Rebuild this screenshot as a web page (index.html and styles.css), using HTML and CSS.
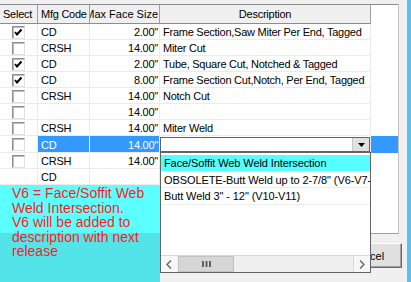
FILE: index.html
```html
<!DOCTYPE html>
<html lang="en">
<head>
    <meta charset="UTF-8">
    <meta name="viewport" content="width=device-width, initial-scale=1.0">
    <title>Cut Operations</title>
    <link rel="stylesheet" href="styles.css">
</head>
<body>

<div class="window">
    <div class="content">
        <div class="grid">
            <table class="cuts">
                <colgroup>
                    <col class="c-sel">
                    <col class="c-mfg">
                    <col class="c-size">
                    <col class="c-desc">
                    <col class="c-fill">
                </colgroup>
                <thead>
                    <tr>
                        <th><div class="hd">Select</div></th>
                        <th><div class="hd">Mfg Code</div></th>
                        <th><div class="hd hd-right"><span>Max Face Size</span></div></th>
                        <th><div class="hd hd-center">Description</div></th>
                        <th class="fill"></th>
                    </tr>
                </thead>
                <tbody>
                    <tr>
                        <td class="sel"><span class="check"><svg width="11" height="11" viewBox="0 0 11 11"><polyline points="2,5 4,7.5 8.5,2.5" fill="none" stroke="#000" stroke-width="2"/></svg></span></td>
                        <td>CD</td><td class="num">2.00"</td>
                        <td>Frame Section,Saw Miter Per End, Tagged</td><td class="fill"></td>
                    </tr>
                    <tr>
                        <td class="sel"><span class="check"></span></td>
                        <td>CRSH</td><td class="num">14.00"</td>
                        <td>Miter Cut</td><td class="fill"></td>
                    </tr>
                    <tr>
                        <td class="sel"><span class="check"><svg width="11" height="11" viewBox="0 0 11 11"><polyline points="2,5 4,7.5 8.5,2.5" fill="none" stroke="#000" stroke-width="2"/></svg></span></td>
                        <td>CD</td><td class="num">2.00"</td>
                        <td>Tube, Square Cut, Notched &amp; Tagged</td><td class="fill"></td>
                    </tr>
                    <tr>
                        <td class="sel"><span class="check"><svg width="11" height="11" viewBox="0 0 11 11"><polyline points="2,5 4,7.5 8.5,2.5" fill="none" stroke="#000" stroke-width="2"/></svg></span></td>
                        <td>CD</td><td class="num">8.00"</td>
                        <td>Frame Section Cut,Notch, Per End, Tagged</td><td class="fill"></td>
                    </tr>
                    <tr>
                        <td class="sel"><span class="check"></span></td>
                        <td>CRSH</td><td class="num">14.00"</td>
                        <td>Notch Cut</td><td class="fill"></td>
                    </tr>
                    <tr>
                        <td class="sel"><span class="check"></span></td>
                        <td></td><td class="num">14.00"</td>
                        <td></td><td class="fill"></td>
                    </tr>
                    <tr>
                        <td class="sel"><span class="check"></span></td>
                        <td>CRSH</td><td class="num">14.00"</td>
                        <td>Miter Weld</td><td class="fill"></td>
                    </tr>
                    <tr class="current">
                        <td class="sel"><span class="check"></span></td>
                        <td>CD</td><td class="num">14.00"</td>
                        <td class="edit">
                            <div class="combo">
                                <span class="combo-btn"><svg width="7" height="4" viewBox="0 0 7 4"><polygon points="0,0 7,0 3.5,4" fill="#000"/></svg></span>
                            </div>
                        </td>
                        <td class="fill"></td>
                    </tr>
                    <tr>
                        <td class="sel"><span class="check"></span></td>
                        <td>CRSH</td><td class="num">14.00"</td>
                        <td></td><td class="fill"></td>
                    </tr>
                    <tr>
                        <td class="sel"></td>
                        <td>CD</td><td class="num"></td>
                        <td></td><td class="fill"></td>
                    </tr>
                </tbody>
            </table>
        </div>
    </div>
    <div class="strip"></div>

    <button class="cancel">Cancel</button>

    <div class="note">
        V6 = Face/Soffit Web<br>
        Weld Intersection.<br>
        V6 will be added to<br>
        description with next<br>
        release
    </div>

    <div class="dropdown">
        <ul class="options">
            <li class="picked">Face/Soffit Web Weld Intersection</li>
            <li>OBSOLETE-Butt Weld up to 2-7/8" (V6-V7-V8)</li>
            <li>Butt Weld 3" - 12" (V10-V11)</li>
        </ul>
        <div class="hscroll">
            <span class="arrow"><svg width="6" height="9" viewBox="0 0 6 9"><polyline points="5,0.5 1,4.5 5,8.5" fill="none" stroke="#606060" stroke-width="1.3"/></svg></span>
            <span class="thumb"><svg width="9" height="6" viewBox="0 0 9 6"><rect x="0" y="0" width="2" height="6" fill="#606060"/><rect x="3.5" y="0" width="2" height="6" fill="#606060"/><rect x="7" y="0" width="2" height="6" fill="#606060"/></svg></span>
            <span class="track"></span>
            <span class="arrow arrow-right"><svg width="6" height="9" viewBox="0 0 6 9"><polyline points="1,0.5 5,4.5 1,8.5" fill="none" stroke="#606060" stroke-width="1.3"/></svg></span>
        </div>
    </div>
</div>

</body>
</html>
```

FILE: styles.css
```css
body {
    margin: 0;
    font-family: "Liberation Sans", Arial, sans-serif;
    color: #000;
}

.window {
    position: relative;
    display: flex;
    width: 411px;
    height: 282px;
    background-color: #f0f0f0;
    overflow: hidden;
}

.content {
    width: 407px;
    padding-top: 4px;
}

.strip {
    width: 4px;
    background-color: #58c2ec;
}

/* grid */

.grid {
    width: 399px;
    height: 230px;
    box-sizing: border-box;
    background-color: #fff;
    border-top: 1px solid #8c8c8c;
    border-right: 1px solid #c4c4c4;
    border-bottom: 1px solid #a0a0a0;
    overflow: hidden;
}

.cuts {
    width: 398px;
    table-layout: fixed;
    border-collapse: separate;
    border-spacing: 0;
    font-size: 11px;
    letter-spacing: -0.25px;
}

.c-sel { width: 38px; }
.c-mfg { width: 52px; }
.c-size { width: 70px; }
.c-desc { width: 211px; }
.c-fill { width: 27px; }

.cuts th {
    padding: 0;
    background-color: #f0f0f0;
    border-right: 1px solid #a0a0a0;
    border-bottom: 1px solid #8c8c8c;
    font-weight: normal;
    text-align: left;
}

.cuts th.fill {
    background-color: #fff;
    border: none;
}

.hd {
    height: 18px;
    line-height: 18px;
    padding: 0 3px;
    white-space: nowrap;
    overflow: hidden;
}

.hd-right {
    display: flex;
    justify-content: flex-end;
    padding: 0 1px 0 0;
}

.hd-right span {
    flex-shrink: 0;
    letter-spacing: 0;
}

.hd-center {
    text-align: center;
}

.cuts td {
    height: 13px;
    padding: 2px 3px 0;
    line-height: 13px;
    border-right: 1px solid #ebebeb;
    border-bottom: 1px solid #ebebeb;
    white-space: nowrap;
    overflow: hidden;
}

.cuts td.num {
    text-align: right;
    padding-right: 1px;
}

.cuts td.sel {
    padding: 0;
    vertical-align: top;
}

.cuts td.fill {
    border: none;
}

.current td {
    background-color: #3399ff;
    color: #fff;
}

.current td.sel {
    background-color: #fff;
}

.current td.edit {
    padding: 0;
    background-color: #fff;
    vertical-align: top;
}

.check {
    display: block;
    width: 13px;
    height: 13px;
    margin: 2px auto 0;
    box-sizing: border-box;
    background-color: #fff;
    border: 1px solid;
    border-color: #8e8e8e #e0e0e0 #e0e0e0 #8e8e8e;
    box-shadow: inset 1px 1px #bdbdbd;
}

.check svg {
    display: block;
}

.combo {
    display: flex;
    height: 15px;
    box-sizing: border-box;
    margin-top: 1px;
    border: 1px solid #646464;
    background-color: #fff;
}

.combo-btn {
    display: flex;
    align-items: center;
    justify-content: center;
    width: 16px;
    margin-left: auto;
    background-color: #e1e1e1;
    border-left: 1px solid #c8c8c8;
}

/* overlays */

.cancel {
    position: absolute;
    left: 332px;
    top: 243px;
    width: 70px;
    height: 25px;
    padding: 0;
    font-family: "Liberation Sans", Arial, sans-serif;
    font-size: 11px;
    color: #000;
    background-color: #e1e1e1;
    border: 1px solid;
    border-color: #fff #696969 #696969 #fff;
    box-shadow: inset -1px -1px #a0a0a0;
}

.note {
    position: absolute;
    left: 0;
    top: 185px;
    width: 160px;
    height: 97px;
    box-sizing: border-box;
    padding: 1px 0 0 12px;
    background: linear-gradient(#5cffff 0, #5cffff 48px, #52e4e8 48px);
    color: #ff1a1a;
    font-size: 14px;
    line-height: 14.5px;
    white-space: nowrap;
}

.dropdown {
    position: absolute;
    left: 160px;
    top: 152px;
    width: 211px;
    height: 121px;
    box-sizing: border-box;
    display: flex;
    flex-direction: column;
    background-color: #fff;
    border: 1px solid #646464;
    font-size: 11px;
    letter-spacing: -0.1px;
}

.options {
    flex: 1;
    list-style: none;
    margin: 0;
    padding: 2px 0 0;
    overflow: hidden;
}

.options li {
    height: 16.5px;
    box-sizing: border-box;
    padding: 2px 0 0 3px;
    line-height: 13px;
    border-bottom: 1px solid #f0f0f0;
    white-space: nowrap;
    overflow: hidden;
}

.options li.picked {
    background-color: #55ffff;
}

.hscroll {
    display: flex;
    height: 17px;
    box-sizing: border-box;
    background-color: #f0f0f0;
    border-top: 1px solid #d8d8d8;
}

.arrow {
    display: flex;
    align-items: center;
    justify-content: center;
    width: 16px;
    background-color: #f7f7f7;
}

.arrow-right {
    border-left: 1px solid #d8d8d8;
}

.thumb {
    display: flex;
    align-items: center;
    justify-content: center;
    width: 56px;
    margin-left: 1px;
    box-sizing: border-box;
    background-color: #d6d6d6;
    border: 1px solid #c2c2c2;
}

.track {
    flex: 1;
}
```
